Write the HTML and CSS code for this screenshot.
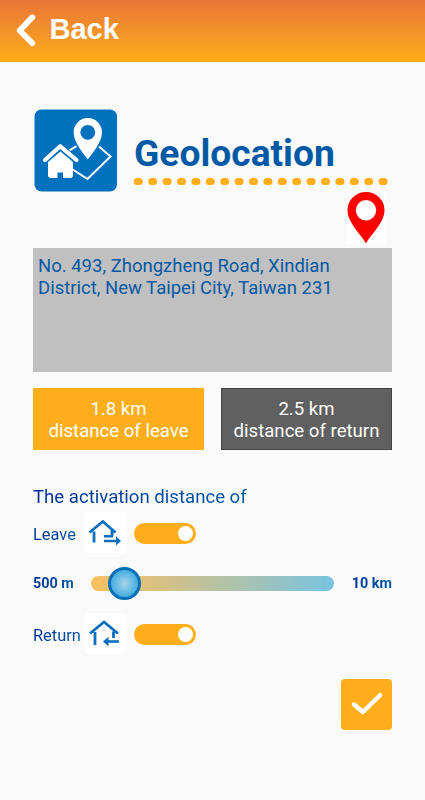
FILE: index.html
```html
<!DOCTYPE html>
<html lang="en">
<head>
    <meta charset="UTF-8">
    <meta name="viewport" content="width=device-width, initial-scale=1.0">
    <title>Geolocation</title>
    <link rel="stylesheet" href="styles.css">
</head>
<body>
    <header class="topbar">
        <svg class="back-arrow" width="20" height="32" viewBox="0 0 20 32">
            <path d="M16.3 3.3 L3.7 16.5 L16.3 29.3" fill="none" stroke="#fff" stroke-width="5.8" stroke-linecap="round" stroke-linejoin="round"/>
        </svg>
        <span class="back-text">Back</span>
    </header>
    <main class="content">
        <div class="title-row">
            <svg class="logo" width="84" height="84" viewBox="0 0 84 84">
                <rect x="0.5" y="0.5" width="82.5" height="82" rx="7" fill="#0071bd"/>
                <path d="M35.5 41.3 L42.5 37.2 M65 37.5 L76.5 47.5 L53.5 70 L38 60" fill="none" stroke="#fff" stroke-width="2"/>
                <path d="M53.8 50.5 C50 45 39.6 34 39.6 23.3 A14.2 14.2 0 0 1 68 23.3 C68 34 57.6 45 53.8 50.5 Z" fill="#fff"/>
                <circle cx="53.8" cy="23.3" r="7.4" fill="#0071bd"/>
                <path d="M14 53 L26.5 42.5 L39 53 V66 Q39 69 36 69 H29 V63.5 H23.5 V69 H17 Q14 69 14 66 Z" fill="#fff"/>
                <path d="M11 51 L26.3 37.3 L42.5 51" fill="none" stroke="#fff" stroke-width="4.2" stroke-linecap="round" stroke-linejoin="round"/>
            </svg>
            <div class="title-box">
                <h1 class="title">Geolocation</h1>
                <svg class="dots" width="258" height="8" viewBox="0 0 258 8">
                    <path d="M4.3 4.5 H254" stroke="#fdae1a" stroke-width="7" stroke-linecap="round" stroke-dasharray="2 12.4"/>
                </svg>
            </div>
        </div>
        <div class="pin-row">
            <svg class="pin" width="38" height="52" viewBox="0 0 38 52">
                <path d="M19 51.5 C14 42 0.5 31 0.5 18 A18.5 18 0 0 1 37.5 18 C37.5 31 24 42 19 51.5 Z" fill="#fe0000"/>
                <circle cx="19" cy="18.2" r="10.2" fill="#fff"/>
            </svg>
        </div>
        <div class="address">No. 493, Zhongzheng Road, Xindian<br>District, New Taipei City, Taiwan 231</div>
        <div class="distances">
            <div class="distance leave">1.8 km<br>distance of leave</div>
            <div class="distance return">2.5 km<br>distance of return</div>
        </div>
        <h2 class="subtitle"><span class="blue-text">The activation distance of</span></h2>
        <div class="option">
            <span class="option-name blue-text">Leave</span>
            <svg class="option-icon" width="42" height="42" viewBox="0 0 42 42">
                <rect x="0.7" width="41" height="41" rx="3" fill="#fff"/>
                <path d="M5.5 20.5 L18.8 9.5 L31.5 20.5 M10 19.5 V30.5 M28 18 V24" fill="none" stroke="#0a6fbe" stroke-width="2.8"/>
                <path d="M20 24.3 H29 M20 29 H33" fill="none" stroke="#0a6fbe" stroke-width="2.6"/>
                <path d="M32 24.3 L37 29 L32 33.5 Z" fill="#0a6fbe"/>
            </svg>
            <span class="toggle"><span class="knob"></span></span>
        </div>
        <div class="slider-row">
            <span class="limit blue-text">500 m</span>
            <div class="slider"><div class="handle"></div></div>
            <span class="limit blue-text">10 km</span>
        </div>
        <div class="option">
            <span class="option-name blue-text">Return</span>
            <svg class="option-icon" width="42" height="42" viewBox="0 0 42 42">
                <rect x="0.7" width="41" height="41" rx="3" fill="#fff"/>
                <path d="M6 20.5 L20 9 L34 20.5 M11 19 V32 M29.5 18.5 V25" fill="none" stroke="#0a6fbe" stroke-width="2.8"/>
                <path d="M23 28.5 H35" fill="none" stroke="#0a6fbe" stroke-width="2.6"/>
                <path d="M24.5 23.8 L19 28.5 L24.5 33.5 Z" fill="#0a6fbe"/>
            </svg>
            <span class="toggle"><span class="knob"></span></span>
        </div>
        <div class="confirm">
            <svg width="32" height="24" viewBox="0 0 32 24">
                <path d="M3 12.5 L11.8 20 L29 3.2" fill="none" stroke="#fff" stroke-width="4.4" stroke-linecap="round" stroke-linejoin="round"/>
            </svg>
        </div>
    </main>
</body>
</html>
```

FILE: styles.css
```css
body {
    font-family: Roboto, sans-serif;
    margin: 0;
    padding: 0;
    background-color: #fafafa;
}
.topbar {
    display: flex;
    align-items: flex-start;
    height: 61.5px;
    box-sizing: border-box;
    padding: 14px 0 0 15.5px;
    background: linear-gradient(#e9753a, #fdae17);
}
.back-text {
    font-family: "Liberation Sans", Arial, sans-serif;
    font-weight: bold;
    font-size: 29px;
    line-height: 32px;
    margin-left: 14px;
    margin-top: -1px;
    color: #fff;
}
.content {
    padding: 47.5px 33px 0;
}
.title-row {
    display: flex;
    height: 83px;
}
.logo {
    margin-left: 1px;
}
.title-box {
    padding-left: 15px;
}
.title {
    margin: 22px 0 0 1px;
    font-size: 37.2px;
    font-weight: bold;
    line-height: 44px;
    color: #0059a5;
    white-space: nowrap;
}
.dots {
    display: block;
    margin-top: 2px;
}
.pin-row {
    display: flex;
    justify-content: flex-end;
    height: 55.6px;
    padding-right: 7px;
}
.pin {
    background-color: #fff;
}
.address {
    height: 124px;
    box-sizing: border-box;
    padding: 7px 5px;
    background-color: #c0c0c0;
    color: #0059a5;
    font-size: 18.5px;
    line-height: 22px;
    white-space: nowrap;
}
.distances {
    display: grid;
    grid-template-columns: 1fr 1fr;
    gap: 17px;
    margin-top: 16.4px;
}
.distance {
    height: 62px;
    box-sizing: border-box;
    padding-top: 10px;
    color: #fff;
    font-size: 18.6px;
    line-height: 22px;
    text-align: center;
    white-space: nowrap;
}
.leave {
    background-color: #fdae1a;
}
.return {
    background-color: #606060;
    border: 1px solid #444;
    padding-top: 9px;
}
.blue-text {
    background: linear-gradient(100deg, #002e96, #005aa5);
    background-clip: text;
    -webkit-background-clip: text;
    color: transparent;
}
.subtitle {
    display: flex;
    margin: 35px 0 3px;
    font-size: 18.6px;
    font-weight: normal;
    line-height: 24px;
}
.option {
    display: flex;
    align-items: center;
    height: 43px;
}
.option-name {
    width: 51px;
    margin-top: 3px;
    font-size: 16.4px;
    line-height: 22px;
    white-space: nowrap;
}
.toggle {
    display: flex;
    align-items: center;
    justify-content: flex-end;
    width: 62px;
    height: 21px;
    box-sizing: border-box;
    padding-right: 3px;
    margin-left: 8px;
    border-radius: 11px;
    background-color: #fdae1a;
}
.knob {
    width: 15px;
    height: 15px;
    border-radius: 50%;
    background-color: #fff;
}
.slider-row {
    display: flex;
    align-items: center;
    justify-content: space-between;
    height: 59px;
    margin-top: -1px;
}
.limit {
    font-size: 14.4px;
    font-weight: bold;
    line-height: 20px;
    margin-top: 2px;
}
.slider {
    display: flex;
    align-items: center;
    width: 243px;
    height: 15px;
    box-sizing: border-box;
    padding-left: 17px;
    border-radius: 8px;
    background: linear-gradient(90deg, #fcc05e, #78c3e2);
}
.handle {
    width: 33px;
    height: 33px;
    box-sizing: border-box;
    border: 3px solid #0870b9;
    border-radius: 50%;
    background: radial-gradient(circle, #a9d3ec, #45aede 70%);
}
.confirm {
    display: flex;
    align-items: center;
    justify-content: center;
    width: 51px;
    height: 51px;
    margin: 23px 0 0 auto;
    border-radius: 4px;
    background-color: #fdae1a;
}
```
